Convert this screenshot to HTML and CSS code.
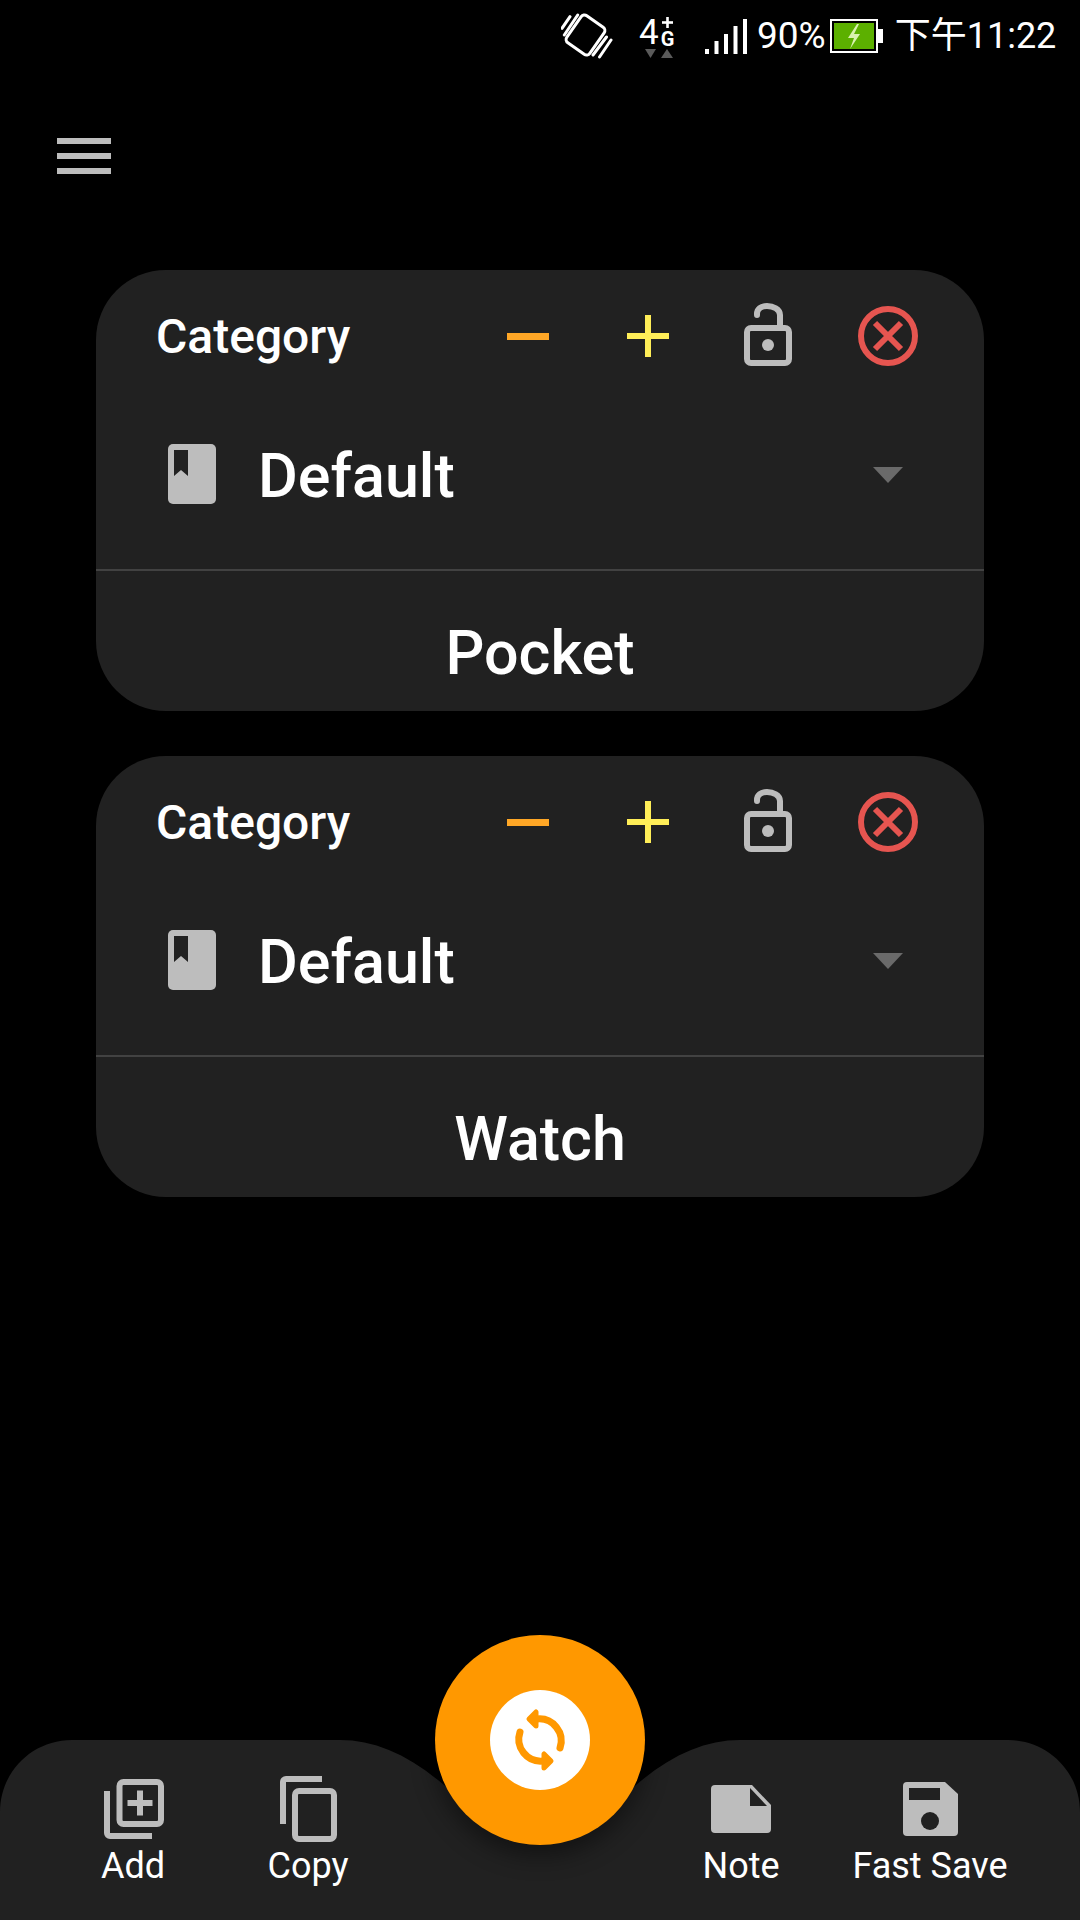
FILE: index.html
```html
<!DOCTYPE html>
<html lang="en">
<head>
<meta charset="utf-8">
<title>Category</title>
<link rel="stylesheet" href="styles.css">
</head>
<body>
<div class="page">
  <header class="status">
    <svg class="st-rotate" width="52" height="48" viewBox="0 0 52 48" fill="none" stroke="#fff" stroke-width="3" stroke-linecap="round">
      <rect x="10.500" y="7.500" width="28" height="33" rx="4" transform="rotate(35 24.500 24)"/>
      <path d="M16.700 4 3.300 24M9 5.700 1 17.300M45.500 26 32 44M50 29 38.500 46"/>
    </svg>
    <div class="st-net">
      <div class="st-4g">
        <span class="st-four">4</span>
        <span class="st-g">
          <svg class="st-plus" width="11" height="11" viewBox="0 0 11 11" fill="#fff"><rect y="4.200" width="11" height="2.600"/><rect x="4.200" width="2.600" height="11"/></svg>
          <b class="st-glet">G</b>
        </span>
      </div>
      <svg class="st-arrows" width="30" height="9" viewBox="0 0 30 9" fill="#5a5a5a"><path d="M0 0H11L5.500 9Z"/><path d="M16 9H28L22 0Z"/></svg>
    </div>
    <svg class="st-signal" width="42" height="35" viewBox="0 0 42 35" fill="#fff"><rect x="0" y="30" width="4" height="5"/><rect x="9.500" y="22" width="4" height="13"/><rect x="19" y="15" width="4" height="20"/><rect x="28.500" y="7" width="4" height="28"/><rect x="38" y="0" width="4" height="35"/></svg>
    <span class="st-pct">90%</span>
    <svg class="st-batt" width="53" height="34" viewBox="0 0 53 34"><rect x="1" y="1" width="46" height="32" fill="none" stroke="#fff" stroke-width="2"/><rect x="4" y="4" width="40" height="26" fill="#5cb000"/><rect x="48" y="10" width="5" height="14" fill="#fff"/><path d="M27 5 18 19h6l-4 11 10-15h-6l5-10Z" fill="#d9f2b0"/></svg>
    <span class="st-time">下午11:22</span>
  </header>

  <div class="menu-row">
    <div class="hamburger"><i></i><i></i><i></i></div>
  </div>

  <main class="cards">
    <section class="card">
      <div class="card-head">
        <span class="card-title">Category</span>
        <div class="tools">
          <span class="tool"><svg width="42" height="7" viewBox="0 0 42 7"><rect width="42" height="7" fill="#ffa726"/></svg></span>
          <span class="tool"><svg width="42" height="42" viewBox="0 0 42 42" fill="#ffee58"><rect y="18" width="42" height="6"/><rect x="18" width="6" height="42"/></svg></span>
          <span class="tool"><svg class="lock" width="48" height="63" viewBox="0 0 48 63" fill="none" stroke="#bdbdbd" stroke-width="6"><rect x="3" y="25" width="42" height="35" rx="4"/><path d="M13 12V11C13 6 17 3 23 3S36 6 36 12V25" stroke-linecap="round"/><circle cx="24" cy="42" r="6" fill="#bdbdbd" stroke="none"/></svg></span>
          <span class="tool"><svg width="60" height="60" viewBox="0 0 60 60" fill="none" stroke="#e65550"><circle cx="30" cy="30" r="27" stroke-width="6"/><path d="M17 17 43 43M43 17 17 43" stroke-width="6"/></svg></span>
        </div>
      </div>
      <div class="select">
        <svg class="book" width="48" height="60" viewBox="0 0 48 60"><rect width="48" height="60" rx="5" fill="#bdbdbd"/><path d="M6 6H20V32L13 26 6 32Z" fill="#212121"/></svg>
        <span class="select-text">Default</span>
        <span class="caret"></span>
      </div>
      <div class="card-foot">Pocket</div>
    </section>

    <section class="card">
      <div class="card-head">
        <span class="card-title">Category</span>
        <div class="tools">
          <span class="tool"><svg width="42" height="7" viewBox="0 0 42 7"><rect width="42" height="7" fill="#ffa726"/></svg></span>
          <span class="tool"><svg width="42" height="42" viewBox="0 0 42 42" fill="#ffee58"><rect y="18" width="42" height="6"/><rect x="18" width="6" height="42"/></svg></span>
          <span class="tool"><svg class="lock" width="48" height="63" viewBox="0 0 48 63" fill="none" stroke="#bdbdbd" stroke-width="6"><rect x="3" y="25" width="42" height="35" rx="4"/><path d="M13 12V11C13 6 17 3 23 3S36 6 36 12V25" stroke-linecap="round"/><circle cx="24" cy="42" r="6" fill="#bdbdbd" stroke="none"/></svg></span>
          <span class="tool"><svg width="60" height="60" viewBox="0 0 60 60" fill="none" stroke="#e65550"><circle cx="30" cy="30" r="27" stroke-width="6"/><path d="M17 17 43 43M43 17 17 43" stroke-width="6"/></svg></span>
        </div>
      </div>
      <div class="select">
        <svg class="book" width="48" height="60" viewBox="0 0 48 60"><rect width="48" height="60" rx="5" fill="#bdbdbd"/><path d="M6 6H20V32L13 26 6 32Z" fill="#212121"/></svg>
        <span class="select-text">Default</span>
        <span class="caret"></span>
      </div>
      <div class="card-foot">Watch</div>
    </section>
  </main>

  <footer class="bar">
    <svg class="bar-bg" width="1080" height="180" viewBox="0 0 1080 180"><path d="M0 180V72C0 32 32 0 72 0H340C380 0 420 20 460 60H620C660 20 700 0 740 0H1008C1048 0 1080 32 1080 72V180Z" fill="#212121"/></svg>
    <div class="bar-group">
      <div class="bar-item bar-item-l">
        <svg width="62" height="69" viewBox="0 0 62 69" fill="none" stroke="#bdbdbd" stroke-width="6"><rect x="17.500" y="9" width="41.500" height="42" rx="4"/><path d="M5 18V60A3 3 0 0 0 8 63H50"/><path d="M38 17.500V42.500M25.500 30H50.500"/></svg>
        <span>Add</span>
      </div>
      <div class="bar-item bar-item-l">
        <svg width="60" height="69" viewBox="0 0 60 69" fill="none" stroke="#bdbdbd" stroke-width="6"><rect x="17" y="18" width="39" height="48" rx="4"/><path d="M5 51V9A3 3 0 0 1 8 6H44"/></svg>
        <span>Copy</span>
      </div>
    </div>
    <div class="bar-group">
      <div class="bar-item bar-item-r">
        <svg width="60" height="69" viewBox="0 0 60 69"><path d="M4 12H41L60 32V56A4 4 0 0 1 56 60H4A4 4 0 0 1 0 56V16A4 4 0 0 1 4 12Z" fill="#bdbdbd"/><path d="M39 15V33H56Z" fill="#212121"/></svg>
        <span>Note</span>
      </div>
      <div class="bar-item bar-item-r">
        <svg width="55" height="69" viewBox="0 0 55 69"><path d="M4 9H42L55 21V59A4 4 0 0 1 51 63H4A4 4 0 0 1 0 59V13A4 4 0 0 1 4 9Z" fill="#bdbdbd"/><rect x="6" y="15" width="31" height="12" fill="#212121"/><circle cx="27" cy="48" r="9" fill="#212121"/></svg>
        <span>Fast Save</span>
      </div>
    </div>
    <button class="fab">
      <span class="fab-inner">
        <svg width="64" height="70" viewBox="0 0 64 70" fill="none" stroke="#ff9800" stroke-width="7" stroke-linecap="round" stroke-linejoin="round"><path d="M29 14A22 22 0 0 1 52 43"/><path d="M35 56A22 22 0 0 1 12 27"/><path d="M21 14 28 7V21Z" fill="#ff9800" stroke-width="5"/><path d="M43 56 36 49V63Z" fill="#ff9800" stroke-width="5"/></svg>
      </span>
    </button>
  </footer>
</div>
</body>
</html>
```
FILE: styles.css
```css
* { box-sizing: border-box; }
html, body { margin: 0; padding: 0; background: #000; }
body { font-family: Roboto, "Noto Sans", sans-serif; color: #fff; }
.page { width: 1080px; height: 1920px; display: flex; flex-direction: column; overflow: hidden; }

/* status bar */
.status { height: 72px; display: flex; align-items: center; padding: 0 0 0 561px; flex: none; }
.st-rotate { flex: none; margin-top: -2px; }
.st-net { width: 40px; margin-left: 26px; display: flex; flex-direction: column; align-items: flex-start; flex: none; margin-top: 2px; }
.st-4g { display: flex; align-items: flex-end; height: 32px; }
.st-four { font-size: 35px; line-height: 30px; font-weight: 400; }
.st-g { display: flex; flex-direction: column; align-items: center; margin-left: 2px; }
.st-plus { display: block; margin-bottom: 3px; }
.st-glet { font-size: 20px; line-height: 17px; font-weight: 700; }
.st-arrows { margin: 1px 0 0 6px; }
.st-signal { margin-left: 26px; margin-top: 0; flex: none; }
.st-pct { font-size: 37px; line-height: 40px; margin-left: 10px; flex: none; }
.st-batt { margin-left: 4px; flex: none; }
.st-time { font-family: Roboto, "Noto Sans CJK SC", sans-serif; font-size: 36px; line-height: 40px; margin-left: 12px; flex: none; white-space: nowrap; font-weight: 400; }

.menu-row { height: 198px; padding: 66px 0 0 57px; flex: none; }
.hamburger { width: 54px; display: flex; flex-direction: column; gap: 9px; }
.hamburger i { display: block; height: 6px; background: #bdbdbd; }

/* cards */
.cards { padding: 0 96px; display: flex; flex-direction: column; gap: 45px; flex: none; }
.card { height: 441px; background: #212121; border-radius: 70px; display: flex; flex-direction: column; overflow: hidden; }
.card-head { height: 132px; display: flex; align-items: center; padding: 0 36px 0 60px; flex: none; }
.card-title { font-size: 48px; font-weight: 500; }
.tools { margin-left: auto; display: flex; }
.tool { width: 120px; height: 72px; display: flex; align-items: center; justify-content: center; }
.lock { margin-top: -3px; }
.select { height: 144px; display: flex; align-items: center; padding: 0 81px 0 72px; margin-bottom: 23px; flex: none; }
.select-text { font-size: 61px; font-weight: 500; margin-left: 42px; padding-top: 4px; }
.caret { margin-left: auto; margin-top: 2px; width: 0; height: 0; border-left: 15px solid transparent; border-right: 15px solid transparent; border-top: 16px solid #6a6a6a; }
.card-foot { border-top: 2px solid #424242; height: 142px; flex: none; display: flex; align-items: center; justify-content: center; font-size: 61px; font-weight: 500; padding-top: 24px; }

/* bottom bar */
.bar { margin-top: auto; height: 180px; position: relative; display: flex; justify-content: space-between; padding: 0 55.5px 0 45.5px; flex: none; }
.bar-bg { position: absolute; left: 0; top: 0; }
.bar-group { display: flex; position: relative; }
.bar-item { display: flex; flex-direction: column; align-items: center; font-size: 36px; line-height: 42px; padding-top: 33px; gap: 3px; }
.bar-item-l { width: 175px; }
.bar-item-r { width: 189px; }
.fab { position: absolute; left: 435px; top: -105px; width: 210px; height: 210px; border-radius: 50%; border: 0; padding: 0; background: #ff9800; display: flex; align-items: center; justify-content: center; box-shadow: 0 10px 24px rgba(0, 0, 0, 0.45); }
.fab-inner { width: 100px; height: 100px; border-radius: 50%; background: #fff; display: flex; align-items: center; justify-content: center; }
```
